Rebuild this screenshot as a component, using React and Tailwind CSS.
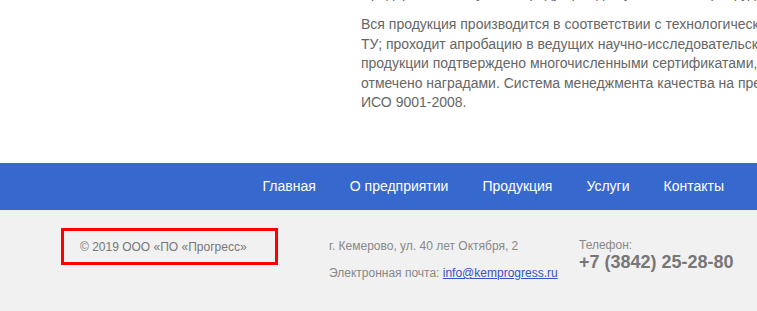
import React from 'react'

const NAV = ['Главная', 'О предприятии', 'Продукция', 'Услуги', 'Контакты']

const LINES = [
  'Вся продукция производится в соответствии с технологическими регламентами и',
  'ТУ; проходит апробацию в ведущих научно-исследовательских институтах. Качество',
  'продукции подтверждено многочисленными сертификатами, а участие в выставках',
  'отмечено наградами. Система менеджмента качества на предприятии соответствует',
  'ИСО 9001-2008.',
]

export default function App() {
  return (
    <div className="w-[757px] h-[311px] overflow-hidden bg-white font-['Liberation_Sans',Arial,sans-serif]">
      {/* About text */}
      <section className="h-[163px] overflow-hidden">
        <div className="ml-[361px] w-[560px] text-[14px] leading-[19.5px] text-[#666] whitespace-nowrap">
          <p className="-mt-[16.5px]">Предприятие выпускает продукцию для угольной и горнорудной промышленности</p>
          <div className="mt-[12px]">
            {LINES.map((l) => (
              <div key={l}>{l}</div>
            ))}
          </div>
        </div>
      </section>

      {/* Nav */}
      <nav className="h-[47px] bg-[#3768ce] flex items-center justify-end pr-[33px] gap-[34px]">
        {NAV.map((n) => (
          <a key={n} className="text-[14px] text-white">
            {n}
          </a>
        ))}
      </nav>

      {/* Footer */}
      <footer className="h-[101px] bg-[#f1f1f1] flex pt-[18px] whitespace-nowrap">
        <div className="shrink-0 ml-[61px] w-[217px] h-[37px] border-[3px] border-[#ff0000] flex items-center pl-[16px]">
          <span className="text-[12px] text-[#777]">© 2019 ООО «ПО «Прогресс»</span>
        </div>
        <div className="shrink-0 ml-[51px] w-[199px] pt-[11px] text-[12px] text-[#888] leading-[14px]">
          <div>г. Кемерово, ул. 40 лет Октября, 2</div>
          <div className="mt-[13px]">
            Электронная почта: <a className="text-[#3553c7] underline">info@kemprogress.ru</a>
          </div>
        </div>
        <div className="shrink-0 ml-[51px] pt-[10px]">
          <div className="text-[12px] leading-[14px] text-[#888]">Телефон:</div>
          <div className="text-[18px] leading-[20px] font-bold text-[#777]">+7 (3842) 25-28-80</div>
        </div>
      </footer>
    </div>
  )
}
